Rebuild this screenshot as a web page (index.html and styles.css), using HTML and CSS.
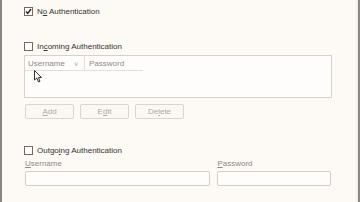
FILE: index.html
```html
<!DOCTYPE html>
<html lang="en">
<head>
    <meta charset="UTF-8">
    <title>Authentication</title>
    <link rel="stylesheet" href="styles.css">
</head>
<body>
    <div class="panel">
        <!-- no auth -->
        <label class="check-row first">
            <span class="check checked">
                <svg width="7" height="7" viewBox="0 0 7 7"><path d="M1 3.5 L2.8 5.5 L6 1" fill="none" stroke="#222" stroke-width="1.4"/></svg>
            </span>
            <span>N<u>o</u> Authentication</span>
        </label>

        <!-- incoming -->
        <label class="check-row incoming">
            <span class="check"></span>
            <span>In<u>c</u>oming Authentication</span>
        </label>
        <div class="list-box">
            <div class="list-head">
                <div class="col col-user">Username <span class="sort">&#8744;</span></div>
                <div class="col col-pass">Password</div>
            </div>
            <svg class="cursor" width="9" height="13" viewBox="0 0 9 13"><path d="M0.5 0.5 L0.5 10 L2.8 8 L4.5 12 L6 11.3 L4.4 7.5 L7.5 7.5 Z" fill="#fff" stroke="#333" stroke-width="1"/></svg>
        </div>
        <div class="buttons">
            <button class="btn" disabled><u>A</u>dd</button>
            <button class="btn" disabled>E<u>d</u>it</button>
            <button class="btn" disabled>De<u>l</u>ete</button>
        </div>

        <!-- outgoing -->
        <label class="check-row outgoing">
            <span class="check"></span>
            <span>Outgo<u>i</u>ng Authentication</span>
        </label>
        <div class="fields">
            <div class="field field-user">
                <span class="field-label"><u>U</u>sername</span>
                <div class="input"></div>
            </div>
            <div class="field field-pass">
                <span class="field-label"><u>P</u>assword</span>
                <div class="input"></div>
            </div>
        </div>
    </div>
</body>
</html>
```

FILE: styles.css
```css
body {
    margin: 0;
    font-family: "Liberation Sans", Arial, sans-serif;
    font-size: 8px;
    color: #333;
    background-color: #8a8680;
}

.panel {
    height: 202px;
    margin: 0 2px 0 2px;
    background-color: #fdf9f4;
    border-right: 2px solid #f3efe9;
    box-sizing: border-box;
    padding-left: 22px;
    padding-right: 25px;
}

u {
    text-decoration: underline;
    text-underline-offset: 1px;
}

/* 复选框行 */
.check-row {
    display: flex;
    align-items: center;
    gap: 4px;
    height: 10px;
}

.check-row.first {
    padding-top: 6px;
}

.check-row.incoming {
    margin-top: 25px;
}

.check-row.outgoing {
    margin-top: 26px;
}

.check {
    width: 7px;
    height: 7px;
    border: 1px solid #6f6a63;
    background: #fff;
    display: flex;
    align-items: center;
    justify-content: center;
}

.check svg {
    display: block;
}

/* 列表 */
.list-box {
    position: relative;
    margin-top: 4px;
    height: 43px;
    width: 308px;
    border: 1px solid #d9d2c4;
    background-color: #fefdfb;
    box-sizing: border-box;
}

.list-head {
    display: flex;
    width: 118px;
    height: 14px;
    border-bottom: 1px solid #e4ded3;
    color: #8e8a84;
}

.col {
    display: flex;
    align-items: center;
    padding-left: 3px;
}

.col-user {
    width: 60px;
    border-right: 1px solid #e4ded3;
    justify-content: space-between;
    padding-right: 6px;
    box-sizing: border-box;
}

.col-pass {
    padding-left: 4px;
}

.sort {
    font-size: 6px;
    color: #a6a29c;
}

.cursor {
    position: absolute;
    left: 9px;
    top: 14px;
}

/* 按钮 */
.buttons {
    display: flex;
    gap: 6px;
    margin-top: 6px;
    margin-left: 1px;
}

.btn {
    width: 49px;
    height: 15px;
    padding: 0;
    font-family: inherit;
    font-size: 8px;
    color: #b0aba3;
    background-color: #fbf8f3;
    border: 1px solid #dcd5c8;
    border-radius: 2px;
}

/* 输入框 */
.fields {
    display: flex;
    gap: 7px;
    margin-top: 4px;
    margin-left: 1px;
}

.field {
    display: flex;
    flex-direction: column;
    gap: 2px;
}

.field-user {
    width: 186px;
}

.field-pass {
    width: 114px;
}

.field-label {
    color: #8e8a84;
    height: 10px;
}

.input {
    height: 13px;
    border: 1px solid #d6cfbf;
    border-radius: 2px;
    background-color: #fefdfb;
}
```
